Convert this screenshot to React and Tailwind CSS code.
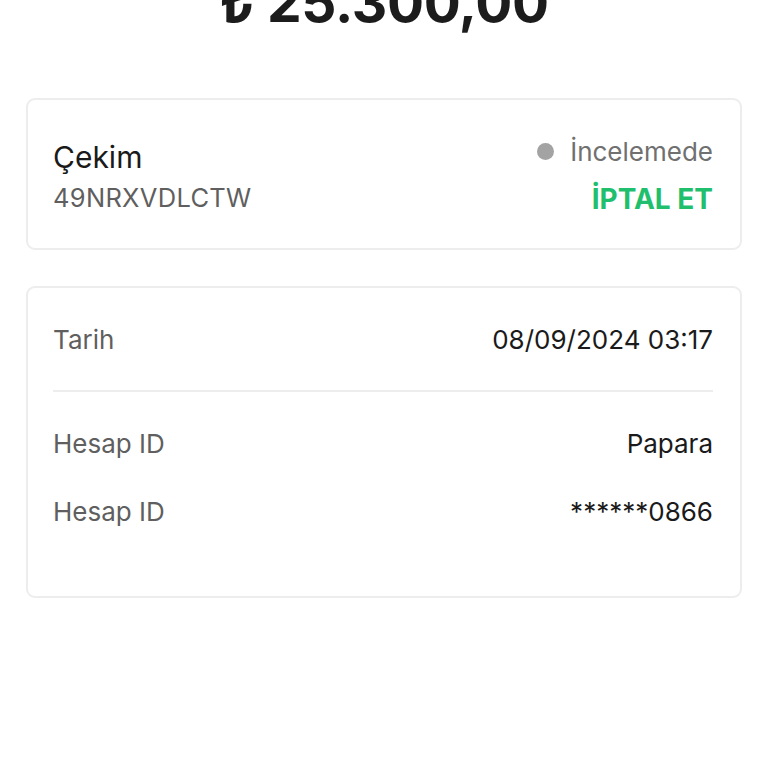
import React from 'react';

const rows = [
  { label: 'Hesap ID', value: 'Papara' },
  { label: 'Hesap ID', value: '******0866' },
];

export default function App() {
  return (
    <div className="w-[768px] h-[768px] overflow-hidden bg-white font-['Inter',sans-serif]">
      <div className="-mt-[26px] text-center text-[55px] font-bold leading-[56px] text-[#1c1c1c] tracking-[-0.3px]">
        ₺ 25.300,00
      </div>

      <div className="px-[26px] pt-[68px]">
        <div className="h-[152px] rounded-[9px] border-2 border-[#ededed] pl-[25px] pr-[27px] flex items-center justify-between">
          <div className="flex flex-col gap-[8px] mt-[6px]">
            <span className="text-[30px] text-[#1a1a1a] leading-[34px]">Çekim</span>
            <span className="text-[25.5px] text-[#5f5f5f] leading-[32px] tracking-[0.3px]">49NRXVDLCTW</span>
          </div>
          <div className="flex flex-col items-end gap-[17px] mt-[2px]">
            <div className="flex items-center gap-[16px]">
              <span className="w-[17px] h-[17px] rounded-full bg-[#a3a3a3]" />
              <span className="text-[26px] text-[#707070] leading-[30px]">İncelemede</span>
            </div>
            <span className="text-[28px] font-bold text-[#1fbf6e] leading-[30px]">İPTAL ET</span>
          </div>
        </div>

        <div className="mt-[36px] h-[312px] rounded-[9px] border-2 border-[#ededed] pl-[25px] pr-[27px] pt-[34px]">
          <div className="flex items-center justify-between h-[34px]">
            <span className="text-[26px] text-[#5f5f5f]">Tarih</span>
            <span className="text-[26px] text-[#1a1a1a]">08/09/2024 03:17</span>
          </div>
          <div className="mt-[34px] h-[2px] bg-[#ededed]" />
          <div className="mt-[34px] flex flex-col gap-[34px]">
            {rows.map((r, i) => (
              <div key={i} className="flex items-center justify-between h-[34px]">
                <span className="text-[26px] text-[#5f5f5f]">{r.label}</span>
                <span className="text-[26px] text-[#1a1a1a]">{r.value}</span>
              </div>
            ))}
          </div>
        </div>
      </div>
    </div>
  );
}
